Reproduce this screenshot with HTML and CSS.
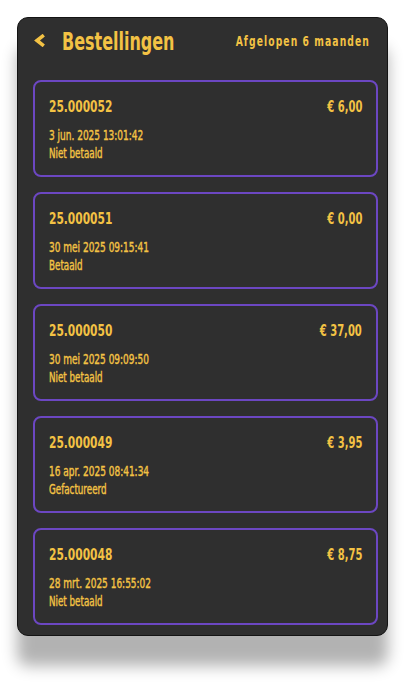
FILE: index.html
```html
<!DOCTYPE html>
<html lang="nl">
<head>
<meta charset="utf-8">
<title>Bestellingen</title>
<link rel="stylesheet" href="styles.css">
</head>
<body>
<div class="panel">
  <header class="header">
    <div class="title-group">
      <svg class="back" width="11" height="13" viewBox="0 0 11 13"><path d="M9.8 1.2 L3 6.5 L9.8 11.8" fill="none" stroke="#f3c244" stroke-width="3.6" stroke-linejoin="miter"/></svg>
      <h1 class="title">Bestellingen</h1>
    </div>
    <div class="period">Afgelopen 6 maanden</div>
  </header>
  <div class="list">
    <div class="card">
      <div class="row"><span class="num">25.000052</span><span class="amount">€ 6,00</span></div>
      <div class="date">3 jun. 2025 13:01:42</div>
      <div class="status">Niet betaald</div>
    </div>
    <div class="card">
      <div class="row"><span class="num">25.000051</span><span class="amount">€ 0,00</span></div>
      <div class="date">30 mei 2025 09:15:41</div>
      <div class="status">Betaald</div>
    </div>
    <div class="card">
      <div class="row"><span class="num">25.000050</span><span class="amount">€ 37,00</span></div>
      <div class="date">30 mei 2025 09:09:50</div>
      <div class="status">Niet betaald</div>
    </div>
    <div class="card">
      <div class="row"><span class="num">25.000049</span><span class="amount">€ 3,95</span></div>
      <div class="date">16 apr. 2025 08:41:34</div>
      <div class="status">Gefactureerd</div>
    </div>
    <div class="card">
      <div class="row"><span class="num">25.000048</span><span class="amount">€ 8,75</span></div>
      <div class="date">28 mrt. 2025 16:55:02</div>
      <div class="status">Niet betaald</div>
    </div>
  </div>
</div>
</body>
</html>
```
FILE: styles.css
```css
html, body {
  margin: 0;
  padding: 0;
  background: #ffffff;
}
body {
  min-height: 685px;
  font-family: "DejaVu Sans Condensed", "DejaVu Sans", sans-serif;
  color: #f3c244;
}
.panel {
  margin: 17px 0 49px 17px;
  width: 369px;
  height: 617px;
  background: #2f2f2f;
  border: 1px solid #141414;
  border-radius: 11px;
  box-shadow: 0 30px 15px rgba(0, 0, 0, 0.3);
  overflow: hidden;
}
.header {
  display: flex;
  align-items: flex-start;
  justify-content: space-between;
  height: 36px;
  padding: 12px 17px 0 16px;
}
.title-group {
  display: flex;
  align-items: flex-start;
  gap: 17px;
  min-width: 0;
  flex: 0 1 auto;
}
.back {
  display: block;
  flex: none;
  margin-top: 4px;
}
.title {
  margin: 0;
  font-size: 24px;
  line-height: 24px;
  font-weight: bold;
  white-space: nowrap;
  transform: scaleX(0.74);
  transform-origin: left center;
}
.period {
  flex: none;
  margin-top: 4px;
  font-size: 14px;
  line-height: 14px;
  font-weight: bold;
  letter-spacing: 1.5px;
  white-space: nowrap;
  transform: scaleX(0.73);
  transform-origin: right center;
}
.list {
  display: flex;
  flex-direction: column;
  gap: 15px;
  padding: 14px 9px 0 15px;
}
.card {
  height: 93px;
  border: 2px solid #6c47c2;
  border-radius: 8px;
  padding: 0 14px;
}
.row {
  display: flex;
  justify-content: space-between;
  align-items: baseline;
  margin-top: 17px;
  line-height: 16px;
}
.num {
  display: inline-block;
  font-size: 16px;
  font-weight: bold;
  transform: scaleX(0.74);
  transform-origin: left center;
}
.amount {
  display: inline-block;
  font-size: 15px;
  font-weight: bold;
  transform: scaleX(0.74);
  transform-origin: right center;
}
.date {
  margin-top: 13px;
  font-size: 13.5px;
  line-height: 14px;
  white-space: nowrap;
  -webkit-text-stroke: 0.4px currentColor;
  transform: scaleX(0.74);
  transform-origin: left center;
}
.status {
  margin-top: 4px;
  font-size: 13.5px;
  line-height: 14px;
  white-space: nowrap;
  -webkit-text-stroke: 0.4px currentColor;
  transform: scaleX(0.72);
  transform-origin: left center;
}
```
